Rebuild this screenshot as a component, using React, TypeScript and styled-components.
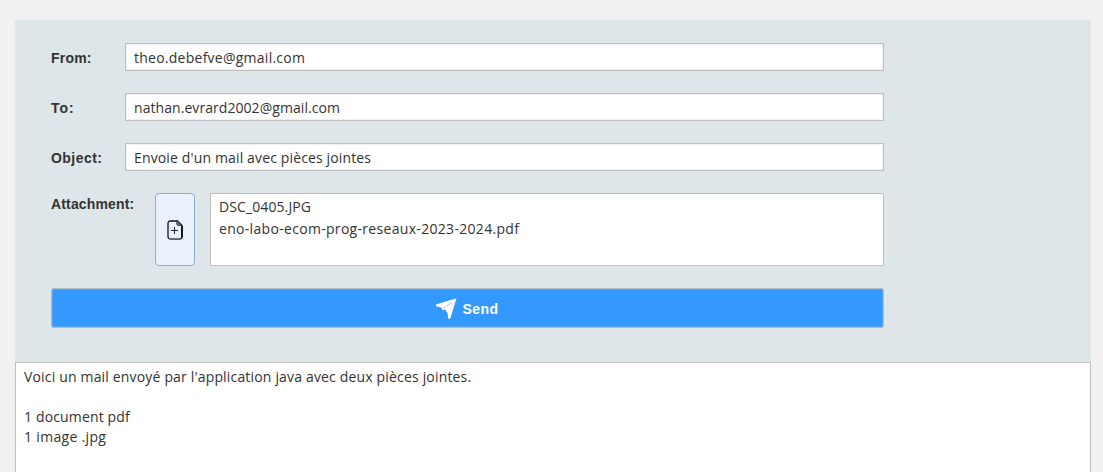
import React from "react";
import styled, { createGlobalStyle } from "styled-components";

const GlobalStyle = createGlobalStyle`
  html, body { margin: 0; background: #f1f1f1; overflow: hidden; }
  * { box-sizing: border-box; }
`;

const Window = styled.main`
  height: 472px;
  padding: 20px 12px 0 15px;
  display: flex;
  flex-direction: column;
  overflow: hidden;
  font-family: "Open Sans", "Noto Sans", sans-serif;
  font-size: 14px;
  color: #333;
`;

const Form = styled.section`
  height: 342px;
  flex: none;
  padding: 23px 207px 0 36px;
  display: flex;
  flex-direction: column;
  gap: 22px;
  background: #dee6e9;
`;

const Row = styled.div`
  display: flex;
  align-items: stretch;
`;

const Label = styled.label<{ $width: number; $spacing?: number }>`
  width: ${(p) => p.$width}px;
  flex: none;
  font: bold 14px/20px "Liberation Sans", Arial, sans-serif;
  letter-spacing: ${(p) => p.$spacing ?? 0}px;
  padding-top: 5px;
  white-space: nowrap;
`;

const AttachmentLabel = styled(Label)`
  padding-top: 1px;
`;

const Text = styled.span<{ $spacing?: number }>`
  letter-spacing: ${(p) => p.$spacing ?? 0}px;
  white-space: nowrap;
`;

const Field = styled.div`
  flex: 1;
  height: 28px;
  padding: 0 8px;
  border: 1px solid #bfbfbf;
  box-shadow: inset 0 0 0 1px #f1f1f1;
  background: #fff;
  line-height: 27px;
`;

const AddButton = styled.button`
  width: 40px;
  height: 73px;
  margin-right: 15px;
  padding: 0;
  display: flex;
  align-items: center;
  justify-content: center;
  border: 1px solid #86afd9;
  border-radius: 4px;
  background: #e9f1fc;
`;

const FileList = styled.ul`
  flex: 1;
  height: 73px;
  margin: 0;
  padding: 2px 8px;
  border: 1px solid #bfbfbf;
  background: #fff;
  list-style: none;
  line-height: 22px;
`;

const SendButton = styled.button`
  height: 40px;
  padding: 0;
  display: flex;
  align-items: center;
  justify-content: center;
  gap: 5px;
  border: 1px solid #adb9c6;
  border-radius: 3px;
  box-shadow: inset 0 0 0 1px #58a3ee;
  background: #3399ff;
  color: #fff;
  font: bold 14px/20px "Liberation Sans", Arial, sans-serif;
  letter-spacing: 0.5px;
`;

const SendText = styled.span`
  padding-top: 2px;
`;

const Message = styled.div`
  flex: 1;
  padding: 4px 8px;
  border: 1px solid #bfbfbf;
  border-bottom: 0;
  background: #fff;
  line-height: 20px;
`;

const Line = styled.div`
  height: 20px;
`;

const FileAddIcon = () => (
  <svg width="16" height="20" viewBox="0 0 16 20" fill="none">
    <path d="M3.5 1H10.5L15 5.5V16.5Q15 19 12.5 19H3.5Q1 19 1 16.5V3.5Q1 1 3.5 1Z" stroke="#111" strokeWidth="1.3" />
    <path d="M2.5 18.7H13.5" stroke="#777" strokeWidth="1.6" />
    <path d="M15 6V17" stroke="#111" strokeWidth="1.8" />
    <path d="M9.8 1V4Q9.8 5.6 11.4 5.6H14.6L10.5 1Z" fill="#777" stroke="#333" strokeWidth="0.9" />
    <path d="M7.5 7V14M4 10.5H11" stroke="#222" strokeWidth="1" />
  </svg>
);

const SendIcon = () => (
  <svg width="21" height="21" viewBox="0 0 21 21">
    <path d="M20.5 .2L0 6.6V8.2L6 9.7V12.2L9 11.2L11.6 15.2L12.2 20.8H14.2Z" fill="#fff" />
    <path d="M15.5 4.8L7.2 10.2" stroke="#8dc6ff" strokeWidth="0.8" />
  </svg>
);

const fields = [
  { label: "From:", labelSpacing: 0.2, value: "theo.debefve@gmail.com", spacing: 0.25 },
  { label: "To:", labelSpacing: 1, value: "nathan.evrard2002@gmail.com", spacing: 0.06 },
  { label: "Object:", labelSpacing: 0.45, value: "Envoie d'un mail avec pièces jointes", spacing: 0.14 },
];

const files = [
  { name: "DSC_0405.JPG", spacing: 0.1 },
  { name: "eno-labo-ecom-prog-reseaux-2023-2024.pdf", spacing: 0.31 },
];

const lines = [
  { text: "Voici un mail envoyé par l'application java avec deux pièces jointes.", spacing: 0.17 },
  { text: "", spacing: 0 },
  { text: "1 document pdf", spacing: 0.15 },
  { text: "1 image .jpg", spacing: 0.32 },
];

export default function App() {
  return (
    <>
      <GlobalStyle />
      <Window>
        <Form>
          {fields.map((f) => (
            <Row key={f.label}>
              <Label $width={74} $spacing={f.labelSpacing}>{f.label}</Label>
              <Field>
                <Text $spacing={f.spacing}>{f.value}</Text>
              </Field>
            </Row>
          ))}
          <Row>
            <AttachmentLabel $width={104} $spacing={0.15}>Attachment:</AttachmentLabel>
            <AddButton aria-label="Add attachment">
              <FileAddIcon />
            </AddButton>
            <FileList>
              {files.map((f) => (
                <li key={f.name}>
                  <Text $spacing={f.spacing}>{f.name}</Text>
                </li>
              ))}
            </FileList>
          </Row>
          <SendButton>
            <SendIcon />
            <SendText>Send</SendText>
          </SendButton>
        </Form>
        <Message>
          {lines.map((l, i) => (
            <Line key={i}>
              <Text $spacing={l.spacing}>{l.text}</Text>
            </Line>
          ))}
        </Message>
      </Window>
    </>
  );
}
